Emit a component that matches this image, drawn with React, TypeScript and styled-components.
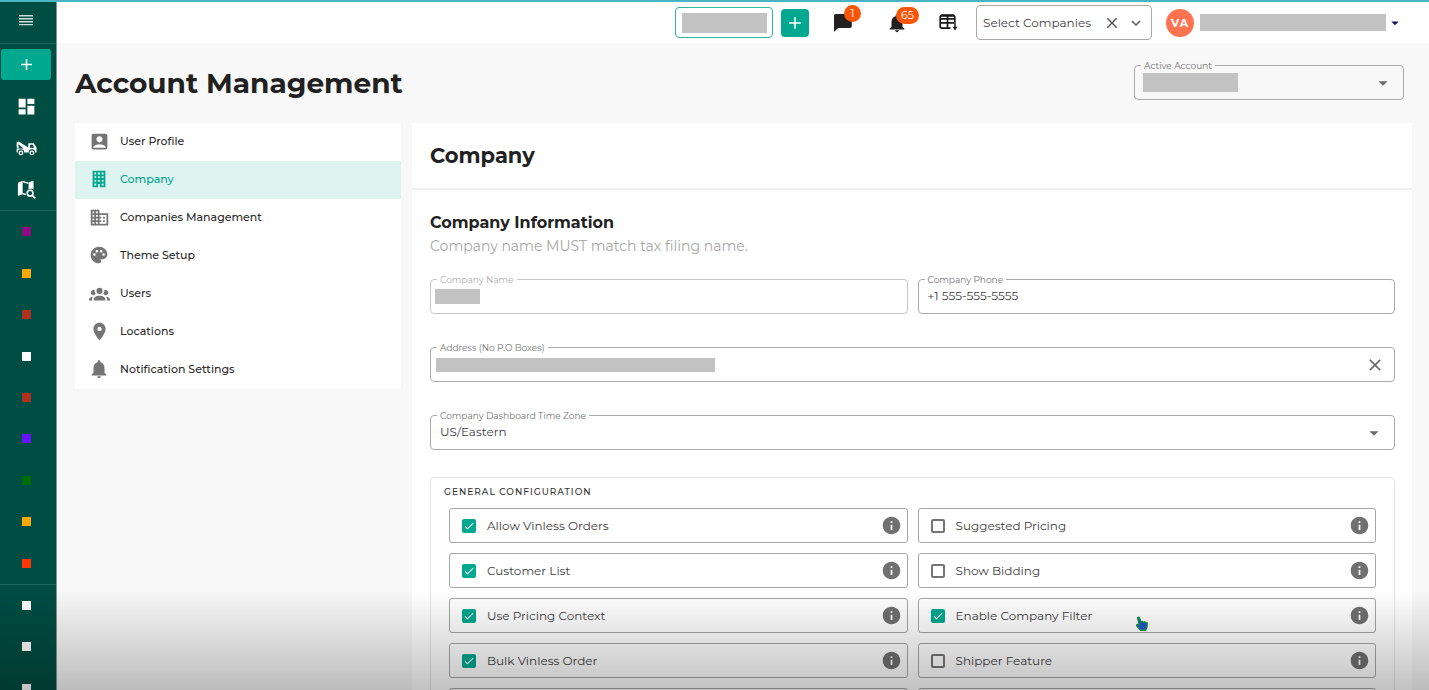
import React from "react";
import styled, { createGlobalStyle } from "styled-components";
import {
  MdAccountBox,
  MdAdd,
  MdArrowDropDown,
  MdBusiness,
  MdCheck,
  MdClose,
  MdDashboard,
  MdInfo,
  MdKeyboardArrowDown,
  MdLocationOn,
  MdNotifications,
  MdPalette,
} from "react-icons/md";

const teal = "#00a88f";
const sidebarGreen = "#004d43";

const GlobalStyle = createGlobalStyle`
  *, *::before, *::after { box-sizing: border-box; }
  body {
    margin: 0;
    overflow: hidden;
    background: #f8f8f8;
    color: #212121;
    font-family: Montserrat, Inter, "Liberation Sans", sans-serif;
    font-size: 12px;
  }
  button, input, select { font: inherit; color: inherit; }
  svg { display: block; flex: none; }
`;

/* ---------- shell ---------- */

const Shell = styled.div`
  display: flex;
  height: 100vh;
  overflow: hidden;
  border-top: 2px solid #48b4c4;
`;

const Sidebar = styled.nav`
  flex: none;
  width: 57px;
  overflow: hidden;
  background: ${sidebarGreen};
  border-right: 1px solid #7d9995;
`;

const SidebarGroup = styled.div<{ $height: number }>`
  display: grid;
  grid-auto-rows: 1fr;
  justify-items: center;
  align-items: center;
  height: ${(p) => p.$height}px;
  padding-right: 4px;
  border-bottom: 1px solid #1c6459;
`;

const SidebarHead = styled(SidebarGroup)`
  padding-bottom: 5px;
`;

const SidebarButton = styled.button<{ $primary?: boolean }>`
  display: flex;
  align-items: center;
  justify-content: center;
  width: 50px;
  height: 31px;
  padding: 0;
  border: 0;
  border-radius: 3px;
  color: #fff;
  background: ${(p) => (p.$primary ? teal : "transparent")};
`;

const Swatch = styled.span<{ $color: string }>`
  width: 9px;
  height: 9px;
  background: ${(p) => p.$color};
`;

const Page = styled.div`
  flex: 1;
  min-width: 0;
`;

const BottomShade = styled.div`
  position: fixed;
  inset: auto 0 0 0;
  height: 100px;
  pointer-events: none;
  background: linear-gradient(rgba(0, 0, 0, 0), rgba(0, 0, 0, 0.24));
`;

const Pointer = styled.svg`
  position: fixed;
  left: 1135px;
  top: 616px;
  pointer-events: none;
`;

/* ---------- top bar ---------- */

const TopBar = styled.header`
  display: flex;
  align-items: center;
  justify-content: flex-end;
  height: 41px;
  padding-right: 25px;
  background: #fff;
`;

const Redacted = styled.span<{ $width: number; $height: number }>`
  flex: none;
  width: ${(p) => p.$width}px;
  height: ${(p) => p.$height}px;
  background: #c2c2c2;
`;

const SearchBox = styled.div`
  display: flex;
  align-items: center;
  width: 98px;
  height: 31px;
  padding-left: 6px;
  border: 1px solid #2fb5a1;
  border-radius: 4px;
`;

const BareInput = styled.input`
  flex: 1;
  min-width: 0;
  width: 0;
  height: 100%;
  padding: 0;
  border: 0;
  outline: 0;
  background: transparent;
`;

const AddButton = styled.button`
  display: flex;
  align-items: center;
  justify-content: center;
  width: 28px;
  height: 28px;
  margin-left: 8px;
  padding: 0;
  border: 0;
  border-radius: 4px;
  color: #fff;
  background: ${teal};
`;

const IconButton = styled.button<{ $gap?: number; $color?: string }>`
  position: relative;
  display: flex;
  flex: none;
  margin: 0 0 0 ${(p) => p.$gap || 0}px;
  padding: 0;
  border: 0;
  background: transparent;
  color: ${(p) => p.$color || "#212121"};
`;

const Badge = styled.span`
  position: absolute;
  left: 10px;
  bottom: 10px;
  min-width: 17px;
  height: 17px;
  padding: 0 5px;
  border-radius: 9px;
  background: #fb5607;
  color: #fff;
  font-size: 11px;
  line-height: 17px;
  text-align: center;
`;

const CompanyFilter = styled.div`
  display: flex;
  align-items: center;
  width: 176px;
  height: 35px;
  margin-left: 18px;
  padding: 0 6px;
  border: 1px solid #a9a9a9;
  border-radius: 4px;
  color: #5a5a5a;
`;

const BareSelect = styled.select`
  flex: 1;
  min-width: 0;
  width: 0;
  height: 100%;
  padding: 0;
  border: 0;
  outline: 0;
  appearance: none;
  background: transparent;
  color: #424242;
`;

const Avatar = styled.span`
  display: flex;
  align-items: center;
  justify-content: center;
  width: 28px;
  height: 28px;
  margin: 0 6px 0 14px;
  border-radius: 50%;
  background: #ff7350;
  color: #fff;
  font-size: 11px;
  font-weight: 700;
  letter-spacing: 1px;
`;

/* ---------- content ---------- */

const Content = styled.div`
  padding: 22px 17px 0 18px;
`;

const TitleRow = styled.div`
  display: flex;
  justify-content: space-between;
  height: 58px;
  padding-right: 8px;
`;

const PageTitle = styled.h1`
  margin: 0;
  font-size: 28px;
  font-weight: 700;
  line-height: 36px;
`;

const Columns = styled.div`
  display: grid;
  grid-template-columns: 326px minmax(0, 1fr);
  align-items: start;
  gap: 11px;
`;

const Menu = styled.nav`
  background: #fff;
`;

const MenuLink = styled.a<{ $active?: boolean }>`
  display: flex;
  align-items: center;
  height: 38px;
  padding-bottom: 2px;
  color: ${(p) => (p.$active ? teal : "#2b2b2b")};
  background: ${(p) => (p.$active ? "#def4f1" : "transparent")};
  font-size: 11px;
  font-weight: 500;
  text-decoration: none;
`;

const MenuIcon = styled.span<{ $active?: boolean }>`
  display: flex;
  justify-content: center;
  width: 22px;
  margin: 0 10px 0 13px;
  color: ${(p) => (p.$active ? teal : "#757575")};
`;

const Panel = styled.main`
  background: #fff;
`;

const PanelHeader = styled.div`
  display: flex;
  align-items: center;
  height: 67px;
  padding: 0 18px;
  border-bottom: 2px solid #efefef;
`;

const PanelTitle = styled.h2`
  margin: 0;
  font-size: 21px;
  font-weight: 700;
`;

const PanelBody = styled.div`
  padding: 21px 17px 0 18px;
`;

const SectionTitle = styled.h3`
  margin: 0;
  font-size: 16px;
  font-weight: 700;
  line-height: 24px;
`;

const SectionNote = styled.p`
  margin: 0 0 22px;
  color: #a8a8a8;
  font-size: 14px;
  line-height: 22px;
`;

const FieldGrid = styled.div`
  display: grid;
  grid-template-columns: 1fr 1fr;
  gap: 33px 10px;
  margin-bottom: 27px;
`;

const FieldBox = styled.div<{ $wide?: boolean; $inset?: number; $width?: number; $muted?: boolean }>`
  position: relative;
  display: flex;
  align-items: center;
  grid-column: ${(p) => (p.$wide ? "1 / -1" : "auto")};
  width: ${(p) => (p.$width ? `${p.$width}px` : "auto")};
  height: 35px;
  padding: 0 9px 0 ${(p) => p.$inset || 9}px;
  border: 1px solid ${(p) => (p.$muted ? "#c6c6c6" : "#ababab")};
  border-radius: 4px;
  color: #6b6b6b;
`;

const FieldLabel = styled.label<{ $muted?: boolean; $on?: string }>`
  position: absolute;
  left: 6px;
  top: -6px;
  padding: 0 3px;
  background: ${(p) => p.$on || "#fff"};
  color: ${(p) => (p.$muted ? "#b0b0b0" : "#757575")};
  font-size: 9px;
  line-height: 12px;
`;

const FieldInput = styled(BareInput)`
  padding-bottom: 2px;
  color: #3a3a3a;
`;

const FieldSelect = styled(BareSelect)`
  padding-bottom: 2px;
`;

/* ---------- configuration ---------- */

const ConfigBox = styled.section`
  padding: 6px 18px 0;
  border: 1px solid #e4e4e4;
  border-radius: 4px;
`;

const ConfigTitle = styled.h4`
  margin: 0 0 8px -5px;
  color: #333;
  font-size: 9px;
  font-weight: 500;
  line-height: 16px;
  letter-spacing: 1px;
  text-transform: uppercase;
`;

const ConfigGrid = styled.div`
  display: grid;
  grid-template-columns: 1fr 1fr;
  gap: 10px;
`;

const Option = styled.div`
  display: flex;
  align-items: center;
  height: 35px;
  padding: 0 5px 0 12px;
  border: 1px solid #a6a6a6;
  border-radius: 3px;
`;

const OptionLabel = styled.label`
  display: flex;
  flex: 1;
  align-items: center;
  gap: 11px;
  color: #3d3d3d;
`;

const CheckWrap = styled.span`
  position: relative;
  display: flex;
  color: #fff;

  svg {
    position: absolute;
    inset: 1px;
    pointer-events: none;
  }
`;

const CheckInput = styled.input`
  width: 14px;
  height: 14px;
  margin: 0;
  appearance: none;
  border: 2px solid #757575;
  border-radius: 2px;

  &:checked {
    border-color: ${teal};
    background: ${teal};
  }
`;

/* ---------- drawn icons ---------- */

const MenuBars = () => (
  <svg width="14" height="12" viewBox="0 0 14 12" fill="#cfe0dd">
    <path d="M0 1h14v1.5H0zM0 4h14v1.5H0zM0 7h14v1.5H0zM0 10h14v1.2H0z" />
  </svg>
);

const TowTruck = () => (
  <svg width="21" height="18" viewBox="0 0 24 20" fill="#fff">
    <path
      d="M23.500 9.500 20.300 4.500H14v5L3.200 2.600.7 3.600v5.600q1.500 1.600 3-.2L2.600 7.800V5.600L8.800 10.500H.7v4.700h1.200a3.700 3.700 0 0 1 7.400 0h5.200a3.700 3.700 0 0 1 7.400 0h1.600zM16 6.300v3.400h5L19 6.300z"
      fillRule="evenodd"
    />
    <circle cx="5.600" cy="15.600" r="2" fill="none" stroke="#fff" strokeWidth="1.600" />
    <circle cx="18.200" cy="15.600" r="2" fill="none" stroke="#fff" strokeWidth="1.600" />
  </svg>
);

const MapSearch = () => (
  <svg width="19" height="19" viewBox="0 0 19 19" fill="none">
    <path
      d="M.9 2.700 5.600.8v13.400L1.500 15.800q-.6.1-.6-.5zM11.600 2.400 15.900.8q.6-.1.600.5v8.200a4.900 4.900 0 0 0-4.900-.1z"
      fill="#fff"
    />
    <path d="M5.600 1.500 11.600 3.300M5.600 13.500l3.200 1" stroke="#fff" strokeWidth="1.400" />
    <circle cx="13.100" cy="13.200" r="2.900" stroke="#fff" strokeWidth="1.600" />
    <path d="m15.300 15.400 2.900 2.900" stroke="#fff" strokeWidth="1.800" />
  </svg>
);

const ChatFlag = () => (
  <svg width="18" height="18" viewBox="0 0 18 18" fill="#212121">
    <path d="M1.800 0H16q1.800 0 1.800 1.800v10.400q0 1.800-1.800 1.800H4L0 18V1.800Q0 0 1.800 0z" />
  </svg>
);

const TableDown = () => (
  <svg width="19" height="17" viewBox="0 0 19 17" fill="none" stroke="#1a1a1a">
    <path
      d="M11.500 14.200H3A1.800 1.800 0 0 1 1.200 12.400V3A1.800 1.800 0 0 1 3 1.200h11A1.800 1.800 0 0 1 15.800 3v5.500M1.200 8.800h14M8.500 2v12.200M1.200 4.800h14.600"
      strokeWidth="1.700"
    />
    <path d="M2 1.800h13" strokeWidth="2" />
    <path d="M16 8.500v5" strokeWidth="1.500" />
    <path d="M13.500 12.800h5L16 16.500z" fill="#1a1a1a" stroke="none" />
  </svg>
);

const OfficeBuilding = () => (
  <svg width="22" height="22" viewBox="0 0 24 24" fill="currentColor">
    <path
      d="M5 3v18h6v-3.500h2V21h6V3H5m2 2h2v2H7V5m4 0h2v2h-2V5m4 0h2v2h-2V5M7 9h2v2H7V9m4 0h2v2h-2V9m4 0h2v2h-2V9m-8 4h2v2H7v-2m4 0h2v2h-2v-2m4 0h2v2h-2v-2m-8 4h2v2H7v-2m8 0h2v2h-2v-2z"
      fillRule="evenodd"
    />
  </svg>
);

const PeopleGroup = () => (
  <svg width="21" height="21" viewBox="0 0 24 24" fill="currentColor">
    <path d="M12 5.500a3.500 3.500 0 1 1 0 7 3.500 3.500 0 0 1 0-7M5 8c.56 0 1.080.15 1.530.42-.15 1.430.27 2.850 1.130 3.960A3 3 0 1 1 5 8m14 0a3 3 0 1 1-2.660 4.380c.86-1.110 1.280-2.530 1.130-3.960.45-.27.97-.42 1.530-.42M5.500 18.250c0-2.070 2.910-3.750 6.500-3.750s6.500 1.680 6.500 3.750V20h-13v-1.750M0 20v-1.500c0-1.390 1.890-2.560 4.450-2.900-.59.68-.95 1.620-.95 2.650V20H0m24 0h-3.500v-1.750c0-1.030-.36-1.970-.95-2.650 2.560.34 4.450 1.510 4.450 2.900V20z" />
  </svg>
);

/* ---------- data ---------- */

const statusColors = [
  "#8e0b7f",
  "#ffa800",
  "#b03020",
  "#ffffff",
  "#b03020",
  "#6414ff",
  "#006b00",
  "#ffa800",
  "#ff3608",
];

const menuItems = [
  { label: "User Profile", icon: <MdAccountBox size={21} /> },
  { label: "Company", icon: <OfficeBuilding />, active: true },
  { label: "Companies Management", icon: <MdBusiness size={21} /> },
  { label: "Theme Setup", icon: <MdPalette size={20} /> },
  { label: "Users", icon: <PeopleGroup /> },
  { label: "Locations", icon: <MdLocationOn size={21} /> },
  { label: "Notification Settings", icon: <MdNotifications size={22} /> },
];

const options = [
  { label: "Allow Vinless Orders", on: true },
  { label: "Suggested Pricing", on: false },
  { label: "Customer List", on: true },
  { label: "Show Bidding", on: false },
  { label: "Use Pricing Context", on: true },
  { label: "Enable Company Filter", on: true },
  { label: "Bulk Vinless Order", on: true },
  { label: "Shipper Feature", on: false },
];

export default function App() {
  return (
    <>
      <GlobalStyle />
      <Shell>
        <Sidebar>
          <SidebarHead $height={42}>
            <SidebarButton>
              <MenuBars />
            </SidebarButton>
          </SidebarHead>
          <SidebarGroup $height={167}>
            <SidebarButton $primary>
              <MdAdd size={19} />
            </SidebarButton>
            <SidebarButton>
              <MdDashboard size={21} />
            </SidebarButton>
            <SidebarButton>
              <TowTruck />
            </SidebarButton>
            <SidebarButton>
              <MapSearch />
            </SidebarButton>
          </SidebarGroup>
          <SidebarGroup $height={374}>
            {statusColors.map((color, i) => (
              <Swatch key={i} $color={color} />
            ))}
          </SidebarGroup>
          <SidebarGroup $height={125}>
            <Swatch $color="#fff" />
            <Swatch $color="#fff" />
            <Swatch $color="#fff" />
          </SidebarGroup>
        </Sidebar>

        <Page>
          <TopBar>
            <SearchBox>
              <Redacted $width={85} $height={20} />
              <BareInput type="text" />
            </SearchBox>
            <AddButton>
              <MdAdd size={20} />
            </AddButton>
            <IconButton $gap={25}>
              <ChatFlag />
              <Badge>1</Badge>
            </IconButton>
            <IconButton $gap={34}>
              <MdNotifications size={22} />
              <Badge>65</Badge>
            </IconButton>
            <IconButton $gap={31}>
              <TableDown />
            </IconButton>
            <CompanyFilter>
              <BareSelect>
                <option>Select Companies</option>
              </BareSelect>
              <IconButton $color="#5a5a5a">
                <MdClose size={18} />
              </IconButton>
              <IconButton $gap={6} $color="#5a5a5a">
                <MdKeyboardArrowDown size={18} />
              </IconButton>
            </CompanyFilter>
            <Avatar>VA</Avatar>
            <Redacted $width={186} $height={17} />
            <IconButton $color="#14126b">
              <MdArrowDropDown size={18} />
            </IconButton>
          </TopBar>

          <Content>
            <TitleRow>
              <PageTitle>Account Management</PageTitle>
              <FieldBox $width={270} $inset={8}>
                <FieldLabel htmlFor="account" $on="#f7f7f7">
                  Active Account
                </FieldLabel>
                <Redacted $width={95} $height={19} />
                <BareSelect id="account" />
                <MdArrowDropDown size={22} />
              </FieldBox>
            </TitleRow>

            <Columns>
              <Menu>
                {menuItems.map((item) => (
                  <MenuLink key={item.label} href="#" $active={item.active}>
                    <MenuIcon $active={item.active}>{item.icon}</MenuIcon>
                    {item.label}
                  </MenuLink>
                ))}
              </Menu>

              <Panel>
                <PanelHeader>
                  <PanelTitle>Company</PanelTitle>
                </PanelHeader>
                <PanelBody>
                  <SectionTitle>Company Information</SectionTitle>
                  <SectionNote>Company name MUST match tax filing name.</SectionNote>
                  <FieldGrid>
                    <FieldBox $inset={4} $muted>
                      <FieldLabel htmlFor="name" $muted>
                        Company Name
                      </FieldLabel>
                      <Redacted $width={45} $height={15} />
                      <FieldInput id="name" type="text" disabled />
                    </FieldBox>
                    <FieldBox>
                      <FieldLabel htmlFor="phone">Company Phone</FieldLabel>
                      <FieldInput id="phone" type="tel" defaultValue="+1 555-555-5555" />
                    </FieldBox>
                    <FieldBox $wide $inset={5}>
                      <FieldLabel htmlFor="address">Address (No P.O Boxes)</FieldLabel>
                      <Redacted $width={279} $height={14} />
                      <FieldInput id="address" type="text" />
                      <IconButton $color="#6b6b6b">
                        <MdClose size={20} />
                      </IconButton>
                    </FieldBox>
                    <FieldBox $wide>
                      <FieldLabel htmlFor="zone">Company Dashboard Time Zone</FieldLabel>
                      <FieldSelect id="zone">
                        <option>US/Eastern</option>
                      </FieldSelect>
                      <MdArrowDropDown size={22} />
                    </FieldBox>
                  </FieldGrid>

                  <ConfigBox>
                    <ConfigTitle>General Configuration</ConfigTitle>
                    <ConfigGrid>
                      {options.map((option) => (
                        <Option key={option.label}>
                          <OptionLabel>
                            <CheckWrap>
                              <CheckInput type="checkbox" defaultChecked={option.on} />
                              {option.on && <MdCheck size={12} />}
                            </CheckWrap>
                            {option.label}
                          </OptionLabel>
                          <IconButton $color="#707070">
                            <MdInfo size={21} />
                          </IconButton>
                        </Option>
                      ))}
                      <Option />
                      <Option />
                    </ConfigGrid>
                  </ConfigBox>
                </PanelBody>
              </Panel>
            </Columns>
          </Content>
        </Page>
      </Shell>
      <BottomShade />
      <Pointer width="14" height="16" viewBox="0 0 14 16">
        <path
          d="M2.500 1.500 4 1l2.200 5 1-.6 1.300.8 1.400-.4.900 1 1.500.1-.3 4.300-1.500 3.200H5.500L1.500 9.600 2 8.300l2.200.6z"
          fill="#2350b4"
          stroke="#0a8a3c"
          strokeWidth="1.200"
          strokeLinejoin="round"
        />
      </Pointer>
    </>
  );
}
